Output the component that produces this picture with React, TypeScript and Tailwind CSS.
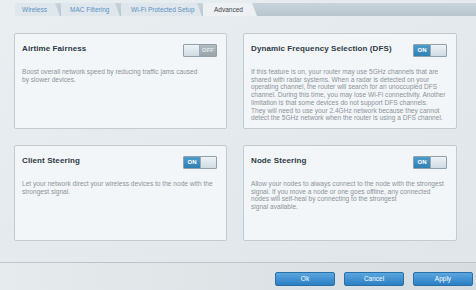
import React from "react";

const tabClip =
  "[clip-path:polygon(0_0,calc(100%-5px)_0,100%_100%,0_100%)]";

function Toggle({ on }: { on: boolean }) {
  return (
    <div className="flex h-[13px] w-[34px] overflow-hidden rounded-[1px] border border-[#8fa0ab]">
      {on ? (
        <>
          <div className="flex w-[16px] items-center justify-center bg-gradient-to-b from-[#4d9ccb] to-[#2f80b3] text-[6px] font-bold text-white">
            ON
          </div>
          <div className="flex-1 border-l border-[#9aabb6] bg-gradient-to-b from-[#eef3f6] to-[#cfdbe3]" />
        </>
      ) : (
        <>
          <div className="flex-1 border-r border-[#9aabb6] bg-gradient-to-b from-[#eef3f6] to-[#cfdbe3]" />
          <div className="flex w-[16px] items-center justify-center bg-gradient-to-b from-[#b3bcc2] to-[#98a3aa] text-[6px] font-bold text-[#e2e6e9]">
            OFF
          </div>
        </>
      )}
    </div>
  );
}

function Card({
  title,
  on,
  lines,
}: {
  title: string;
  on: boolean;
  lines: string[];
}) {
  return (
    <div className="flex h-[96px] flex-col rounded-[2px] border border-[#c3cbd1] bg-[#f3f6f8] px-[7px] pt-[10px]">
      <div className="flex items-start justify-between">
        <div className="text-[8px] font-bold leading-[10px] tracking-[0.1px] text-[#2e3a44]">
          {title}
        </div>
        <div className="mr-[2px]">
          <Toggle on={on} />
        </div>
      </div>
      <div className="mt-[11px] text-[6.6px] leading-[7.7px] text-[#8b9399]">
        {lines.map((l, i) => (
          <div key={i}>{l}</div>
        ))}
      </div>
    </div>
  );
}

function Btn({ label }: { label: string }) {
  return (
    <div className="flex h-[14px] w-[60px] items-center justify-center rounded-[2px] border border-[#2a6fa6] bg-gradient-to-b from-[#5aa7e0] to-[#2b7fc3] text-[6.5px] text-white">
      {label}
    </div>
  );
}

export default function App() {
  return (
    <div
      className="flex h-[290px] w-[476px] flex-col bg-gradient-to-br from-[#e9eef1] to-[#dfe5e9] text-[#333]"
      style={{ fontFamily: '"Liberation Sans", Arial, sans-serif' }}
    >
      {/* tabs */}
      <div className="ml-[15px] mt-[3px] flex h-[13px] bg-gradient-to-b from-[#c9d4db] to-[#b7c5ce]">
        <div
          className={`flex w-[45px] items-center pl-[7px] text-[6.5px] text-[#5b91c4] bg-[#dfe7ec] ${tabClip}`}
        >
          Wireless
        </div>
        <div
          className={`ml-[1px] flex w-[59px] items-center pl-[9px] text-[6.5px] text-[#5b91c4] bg-[#dfe7ec] ${tabClip}`}
        >
          MAC Filtering
        </div>
        <div
          className={`ml-[1px] flex w-[81px] items-center pl-[10px] text-[6.5px] text-[#5b91c4] bg-[#dfe7ec] ${tabClip}`}
        >
          Wi-Fi Protected Setup
        </div>
        <div
          className={`ml-[1px] flex w-[54px] items-center pl-[11px] text-[6.5px] text-[#3b4248] bg-[#edf1f4] ${tabClip}`}
        >
          Advanced
        </div>
      </div>

      {/* cards */}
      <div className="ml-[14px] mt-[17px] grid w-[443px] grid-cols-[213px_214px] gap-x-[16px] gap-y-[16px]">
        <Card
          title="Airtime Fairness"
          on={false}
          lines={[
            "Boost overall network speed by reducing traffic jams caused",
            "by slower devices.",
          ]}
        />
        <Card
          title="Dynamic Frequency Selection (DFS)"
          on={true}
          lines={[
            "If this feature is on, your router may use 5GHz channels that are",
            "shared with radar systems. When a radar is detected on your",
            "operating channel, the router will search for an unoccupied DFS",
            "channel. During this time, you may lose Wi-Fi connectivity. Another",
            "limitation is that some devices do not support DFS channels.",
            "They will need to use your 2.4GHz network because they cannot",
            "detect the 5GHz network when the router is using a DFS channel.",
          ]}
        />
        <Card
          title="Client Steering"
          on={true}
          lines={[
            "Let your network direct your wireless devices to the node with the",
            "strongest signal.",
          ]}
        />
        <Card
          title="Node Steering"
          on={true}
          lines={[
            "Allow your nodes to always connect to the node with the strongest",
            "signal. If you move a node or one goes offline, any connected",
            "nodes will self-heal by connecting to the strongest",
            "signal available.",
          ]}
        />
      </div>

      {/* footer */}
      <div className="mt-[21px] flex flex-1 flex-col border-t border-[#bcc5cb] bg-gradient-to-r from-[#e6ebee] to-[#d6dcdf]">
        <div className="mr-[3px] mt-[9px] flex justify-end gap-[9px]">
          <Btn label="Ok" />
          <Btn label="Cancel" />
          <Btn label="Apply" />
        </div>
      </div>
    </div>
  );
}
